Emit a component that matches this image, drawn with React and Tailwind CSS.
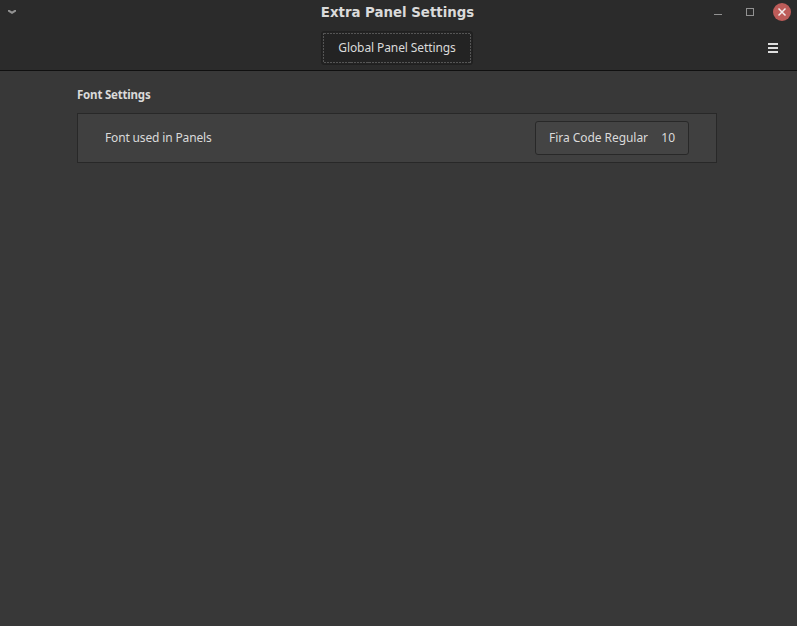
function WindowControls() {
  return (
    <div className="flex h-6 items-center justify-end">
      <svg width="84" height="24" viewBox="0 0 84 24" fill="none" shapeRendering="crispEdges">
        <rect x="1" y="14" width="8" height="1" fill="#929292" />
        <rect x="33.5" y="8.5" width="7" height="7" stroke="#929292" />
        <circle cx="69" cy="12" r="9" fill="#bd5c59" shapeRendering="geometricPrecision" />
        <path d="M65.5 8.5l7 7M72.5 8.5l-7 7" stroke="#f3eded" strokeWidth="1.5" shapeRendering="geometricPrecision" />
      </svg>
    </div>
  );
}

export default function App() {
  return (
    <div className="flex h-[626px] w-[797px] flex-col overflow-hidden bg-[#383838] font-['Noto_Sans',sans-serif] text-xs text-[#dadada]">
      <header className="h-[71px] border-b border-[#101010] bg-[#2b2b2b]">
        <div className="grid h-6 grid-cols-[1fr_auto_1fr] items-center">
          <svg className="ml-2" width="8" height="4" viewBox="0 0 8 4" fill="#929292">
            <path d="M0 0h1.5L4 1.5 6.5 0H8v1.6L4 4 0 1.6z" />
          </svg>
          <h1 className="mr-0.5 pt-0.5 font-['DejaVu_Sans',sans-serif] text-[13.33px] leading-[22px] font-bold whitespace-nowrap">Extra Panel Settings</h1>
          <WindowControls />
        </div>
        <div className="grid h-[46px] grid-cols-[1fr_auto_1fr] items-center">
          <span />
          <button className="relative mt-0.5 mr-[3px] flex h-[34px] w-[152px] items-center justify-center rounded-[3px] border border-[#202020] bg-[#232323] tracking-[-0.1px] whitespace-nowrap">
            <svg className="absolute inset-0" width="150" height="32" fill="none" shapeRendering="crispEdges">
              <rect x="1.5" y="1.5" width="147" height="29" stroke="#555555" strokeDasharray="2 1" />
            </svg>
            Global Panel Settings
          </button>
          <button className="mt-0.5 mr-[19px] flex flex-col gap-0.5 justify-self-end">
            <span className="h-0.5 w-2.5 bg-[#dedede]" />
            <span className="h-0.5 w-2.5 bg-[#dedede]" />
            <span className="h-0.5 w-2.5 bg-[#dedede]" />
          </button>
        </div>
      </header>
      <main className="px-[77px] pt-4">
        <h2 className="h-[26px] text-[11.5px] leading-4 font-bold tracking-[-0.2px]">Font Settings</h2>
        <section className="flex h-[50px] w-[640px] items-center justify-between border border-[#282828] bg-[#404040] px-[27px]">
          <span className="tracking-[-0.15px]">Font used in Panels</span>
          <button className="flex h-[34px] w-[154px] items-center justify-between rounded-[3px] border border-[#282828] bg-[#444444] px-[13px] tracking-[-0.05px] whitespace-nowrap">
            <span>Fira Code Regular</span>
            <span>10</span>
          </button>
        </section>
      </main>
    </div>
  );
}
